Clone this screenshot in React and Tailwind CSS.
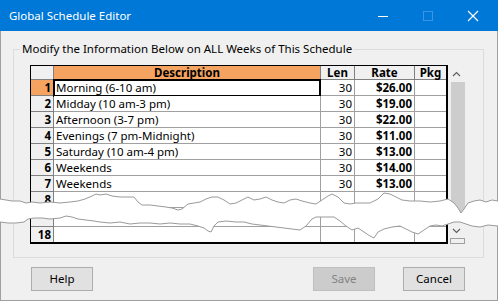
import React from 'react';

const rows = [
  { n: 1, desc: 'Morning (6-10 am)', len: '30', rate: '$26.00' },
  { n: 2, desc: 'Midday (10 am-3 pm)', len: '30', rate: '$19.00' },
  { n: 3, desc: 'Afternoon (3-7 pm)', len: '30', rate: '$22.00' },
  { n: 4, desc: 'Evenings (7 pm-Midnight)', len: '30', rate: '$11.00' },
  { n: 5, desc: 'Saturday (10 am-4 pm)', len: '30', rate: '$13.00' },
  { n: 6, desc: 'Weekends', len: '30', rate: '$14.00' },
  { n: 7, desc: 'Weekends', len: '30', rate: '$13.00' },
  { n: 8, desc: '', len: '', rate: '' },
];

const topEdge = [
  [0, 199], [6, 200], [12, 201], [20, 201], [26, 203], [32, 202], [40, 203], [50, 202], [60, 203], [70, 202],
  [78, 201], [85, 199], [92, 196], [96, 194], [100, 195], [106, 194], [112, 196], [120, 197], [128, 197],
  [134, 197], [138, 202], [142, 205], [150, 205], [158, 206], [166, 207], [172, 208], [178, 210], [182, 209],
  [188, 204], [194, 203], [200, 202], [206, 199], [212, 197], [218, 197], [224, 200], [230, 204], [236, 203],
  [242, 200], [248, 197], [254, 200], [260, 199], [266, 197], [272, 200], [278, 202], [284, 203], [290, 200],
  [296, 199], [302, 201], [310, 203], [316, 204], [322, 200], [328, 196], [332, 194], [338, 197], [344, 203],
  [350, 204], [356, 203], [362, 203], [370, 203], [378, 199], [384, 193], [390, 194], [396, 197], [402, 200],
  [410, 201], [420, 201], [430, 202], [440, 201], [448, 199], [454, 203], [458, 208], [461, 213], [464, 209],
  [468, 203], [474, 201], [480, 200], [486, 202], [492, 200], [498, 201],
];

const bottomEdge = [
  [0, 222], [8, 223], [16, 223], [24, 222], [28, 219], [34, 218], [42, 218], [50, 219], [60, 218], [66, 216],
  [72, 217], [78, 219], [86, 220], [94, 221], [100, 222], [110, 223], [120, 222], [130, 224], [140, 223],
  [150, 223], [160, 224], [170, 223], [180, 224], [190, 224], [198, 226], [204, 228], [208, 231], [211, 232],
  [214, 226], [218, 222], [226, 221], [236, 222], [244, 222], [252, 224], [260, 225], [268, 226], [276, 227],
  [284, 228], [292, 229], [300, 230], [306, 226], [312, 219], [316, 217], [324, 217], [334, 217], [340, 221],
  [346, 226], [352, 230], [358, 228], [364, 232], [370, 236], [374, 238], [378, 232], [384, 229], [392, 227],
  [400, 226], [406, 229], [412, 232], [418, 234], [424, 230], [430, 226], [436, 225], [442, 226], [448, 224],
  [454, 222], [460, 222], [466, 224], [472, 226], [480, 227], [488, 225], [498, 226],
];

const pts = (arr) => arr.map(([x, y]) => `${x},${y}`).join(' ');

function Row({ r, last, current }) {
  const line = last ? '' : 'border-b';
  return (
    <div className={`flex ${last ? 'h-[15px]' : 'h-[16px]'} leading-[15px]`}>
      <div className={`w-[23px] border-r ${line} border-[#808080] text-right pr-[2px] font-bold ${current ? 'bg-[#f4a460]' : 'bg-[#f0f0f0]'}`}>
        {r.n}
      </div>
      <div className={`relative w-[267px] border-r ${line} border-[#a0a0a0] bg-white pl-[2px] whitespace-nowrap`}>
        {r.desc}
        {current && <span className="absolute -left-[1px] -top-[1px] w-[268px] h-[18px] border-2 border-black" />}
      </div>
      <div className={`w-[34px] border-r ${line} border-[#a0a0a0] bg-white text-right pr-[2px]`}>{r.len}</div>
      <div className={`w-[60px] border-r ${line} border-[#a0a0a0] bg-white text-right pr-[2px] font-bold`}>{r.rate}</div>
      <div className={`w-[31px] ${line} border-[#a0a0a0] bg-white`} />
    </div>
  );
}

function Button({ children, disabled }) {
  return (
    <div
      className={`w-[62px] h-[24px] flex items-center justify-center border ${
        disabled ? 'border-[#bfbfbf] bg-[#cccccc] text-[#838383]' : 'border-[#adadad] bg-[#e1e1e1] text-black'
      }`}
    >
      {children}
    </div>
  );
}

export default function App() {
  return (
    <div
      className="relative w-[498px] h-[301px] flex flex-col text-[11.5px] overflow-hidden"
      style={{ fontFamily: '"Noto Sans", "Open Sans", sans-serif' }}
    >
      {/* Title bar */}
      <div className="h-[31px] bg-[#0078d7] flex items-center text-white">
        <div className="pl-[9px] flex-1 text-[11.5px]">Global Schedule Editor</div>
        <svg width="498" height="31" className="absolute left-0 top-0 pointer-events-none">
          <line x1="378" y1="16.5" x2="388" y2="16.5" stroke="#fff" strokeWidth="1" />
          <rect x="423.5" y="11.5" width="9" height="9" fill="none" stroke="#3d95e0" strokeWidth="1" />
          <path d="M468 11 L478 21 M478 11 L468 21" stroke="#fff" strokeWidth="1.2" />
        </svg>
      </div>

      {/* Body */}
      <div className="flex-1 bg-[#f0f0f0] border-x border-b border-[#a0a0a0] flex flex-col text-black">
        <fieldset className="ml-[12px] mr-[13px] mt-[10px] border border-[#dcdcdc] pl-[6px] pr-0 pt-0 pb-[13px]">
          <legend className="px-[2px] leading-[16px] text-black">
            Modify the Information Below on ALL Weeks of This Schedule
          </legend>
          <div className="flex mt-[8px] ml-[10px]">
            {/* Grid */}
            <div className="border border-black border-r-2 border-b-2">
              <div className="flex h-[14px] leading-[13px] font-bold">
                <div className="w-[23px] border-r border-b border-[#808080] bg-[#f0f0f0]" />
                <div className="w-[267px] border-r border-b border-[#808080] bg-[#f4a460] text-center">Description</div>
                <div className="w-[34px] border-r border-b border-[#808080] bg-[#f0f0f0] text-center">Len</div>
                <div className="w-[60px] border-r border-b border-[#808080] bg-[#f0f0f0] text-center">Rate</div>
                <div className="w-[31px] border-b border-[#808080] bg-[#f0f0f0] text-center">Pkg</div>
              </div>
              {rows.map((r) => (
                <Row key={r.n} r={r} current={r.n === 1} />
              ))}
              <div className="flex h-[19px]">
                <div className="w-[23px] border-r border-b border-[#808080] bg-[#f0f0f0]" />
                <div className="w-[267px] border-r border-b border-[#a0a0a0] bg-white" />
                <div className="w-[34px] border-r border-b border-[#a0a0a0] bg-white" />
                <div className="w-[60px] border-r border-b border-[#a0a0a0] bg-white" />
                <div className="w-[31px] border-b border-[#a0a0a0] bg-white" />
              </div>
              <Row r={{ n: 18, desc: '', len: '', rate: '' }} last />
            </div>

            {/* Scrollbar */}
            <div className="w-[17px] flex flex-col bg-[#f0f0f0]">
              <div className="h-[17px] flex items-center justify-center">
                <svg width="9" height="6" viewBox="0 0 9 6">
                  <path d="M1 5 L4.5 1.5 L8 5" fill="none" stroke="#606060" strokeWidth="1.2" />
                </svg>
              </div>
              <div className="ml-[3px] w-[14px] h-[132px] bg-[#cdcdcd]" />
              <div className="flex-1" />
              <div className="h-[14px] flex items-center justify-center">
                <svg width="9" height="6" viewBox="0 0 9 6">
                  <path d="M1 1 L4.5 4.5 L8 1" fill="none" stroke="#606060" strokeWidth="1.2" />
                </svg>
              </div>
              <div className="ml-[2px] w-[15px] h-[6px] border border-[#a0a0a0] bg-[#f0f0f0]" />
            </div>
          </div>
        </fieldset>

        <div className="flex mt-[9px] pl-[30px] pr-[32px]">
          <Button>Help</Button>
          <div className="flex-1" />
          <Button disabled>Save</Button>
          <div className="w-[28px]" />
          <Button>Cancel</Button>
        </div>
      </div>

      {/* Torn-paper break */}
      <svg width="498" height="301" className="absolute left-0 top-0 pointer-events-none">
        <polygon points={pts([...topEdge, ...[...bottomEdge].reverse()])} fill="#ffffff" />
        <polyline points={pts(topEdge)} fill="none" stroke="#9a9a9a" strokeWidth="1" />
        <polyline points={pts(bottomEdge)} fill="none" stroke="#9a9a9a" strokeWidth="1" />
      </svg>
    </div>
  );
}
